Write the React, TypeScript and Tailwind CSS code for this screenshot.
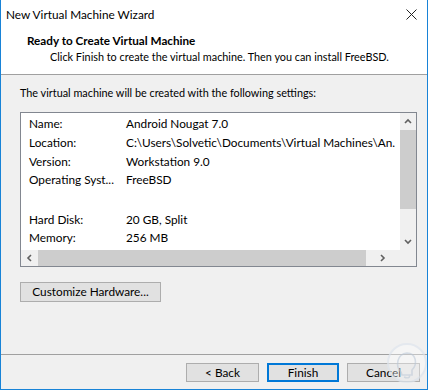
import React from "react";

const font = { fontFamily: 'Lato, "Noto Sans", sans-serif' };

function Chevron({ dir }: { dir: "up" | "down" | "left" | "right" }) {
  const paths: Record<string, string> = {
    up: "M1 5 L4 2 L7 5",
    down: "M1 2 L4 5 L7 2",
    left: "M5 1 L2 4 L5 7",
    right: "M2 1 L5 4 L2 7",
  };
  return (
    <svg width="8" height="8" viewBox="0 0 8 8">
      <path d={paths[dir]} fill="none" stroke="#606060" strokeWidth="1.6" />
    </svg>
  );
}

const rows: ([string, string] | null)[] = [
  ["Name:", "Android Nougat 7.0"],
  ["Location:", "C:\\Users\\Solvetic\\Documents\\Virtual Machines\\An."],
  ["Version:", "Workstation 9.0"],
  ["Operating Syst...", "FreeBSD"],
  null,
  ["Hard Disk:", "20 GB, Split"],
  ["Memory:", "256 MB"],
];

export default function App() {
  return (
    <div
      style={font}
      className="w-[428px] h-[390px] bg-[#f0f0f0] border-x border-b border-[#1883d7] flex flex-col text-[10.85px] text-black overflow-hidden relative whitespace-nowrap"
    >
      {/* Title bar */}
      <div className="h-[29px] bg-white flex items-center justify-between pl-[5px] pr-[10px]">
        <span className="leading-[16px] text-[11.8px]">New Virtual Machine Wizard</span>
        <svg width="11" height="11" viewBox="0 0 11 11">
          <path d="M0.5 0.5 L10.5 10.5 M10.5 0.5 L0.5 10.5" stroke="#222" strokeWidth="1" />
        </svg>
      </div>
      {/* Header */}
      <div className="h-[46px] bg-white pt-[3px] border-b border-[#a0a0a0]">
        <div className="pl-[26px] font-bold leading-[16px] text-[11.7px]">Ready to Create Virtual Machine</div>
        <div className="pl-[49px] leading-[16px] mt-[1px]">
          Click Finish to create the virtual machine. Then you can install FreeBSD.
        </div>
      </div>
      {/* Body */}
      <div className="px-[19px] pt-[10px]">
        <div className="leading-[16px]">The virtual machine will be created with the following settings:</div>
        <div className="mt-[11px] w-[397px] h-[155px] border border-[#828790] bg-white flex flex-col">
          <div className="flex flex-1 min-h-0">
            <div className="flex-1 overflow-hidden pt-[2px] pl-[8px] text-[11.8px]">
              {rows.map((r, i) =>
                r ? (
                  <div key={i} className="flex h-[18.6px] items-center">
                    <span className="w-[97px] shrink-0">{r[0]}</span>
                    <span>{r[1]}</span>
                  </div>
                ) : (
                  <div key={i} className="h-[21px]" />
                )
              )}
            </div>
            <div className="w-[16px] bg-[#f0f0f0] flex flex-col items-center">
              <div className="h-[17px] flex items-center justify-center">
                <Chevron dir="up" />
              </div>
              <div className="w-full h-[79px] bg-[#cdcdcd]" />
              <div className="flex-1" />
              <div className="h-[17px] flex items-center justify-center">
                <Chevron dir="down" />
              </div>
            </div>
          </div>
          <div className="h-[16px] flex bg-[#f0f0f0]">
            <div className="w-[17px] flex items-center justify-center">
              <Chevron dir="left" />
            </div>
            <div className="w-[328px] bg-[#cdcdcd]" />
            <div className="flex-1 flex items-center justify-center">
              <Chevron dir="right" />
            </div>
            <div className="w-[16px] bg-[#f0f0f0]" />
          </div>
        </div>
        <button
          style={font}
          className="mt-[15px] w-[141px] h-[20px] bg-[#e1e1e1] border border-[#adadad] text-[11.8px] leading-[16px] flex items-center justify-center"
        >
          Customize Hardware...
        </button>
      </div>
      <div className="flex-1" />
      {/* Footer */}
      <div className="border-t border-[#a0a0a0] h-[35px] flex justify-end items-start pt-[8px] pr-[7px] gap-[8px]">
        <button style={font} className="w-[73px] h-[19px] bg-[#e1e1e1] border border-[#adadad] text-[11.8px] flex items-center justify-center">
          &lt; Back
        </button>
        <button style={font} className="w-[72px] h-[19px] bg-[#e1e1e1] border-2 border-[#0078d7] text-[11.8px] flex items-center justify-center">
          Finish
        </button>
        <button style={font} className="w-[73px] h-[19px] bg-[#e1e1e1] border border-[#adadad] text-[11.8px] flex items-center justify-center">
          Cancel
        </button>
      </div>
      {/* Watermark logo */}
      <svg className="absolute left-[384px] top-[342px] opacity-70" width="44" height="44" viewBox="0 0 44 44">
        <circle cx="22" cy="21" r="19" fill="#ffffff" fillOpacity="0.5" stroke="#dfe6ee" strokeWidth="2" />
        <path d="M16 30 C10 24 12 12 22 11 C31 11 33 22 27 28 L27 33 L17 33 Z" fill="none" stroke="#c9d3df" strokeWidth="1.6" />
        <path d="M19 35 C23 37 26 35 24 33" fill="none" stroke="#c9d3df" strokeWidth="1.4" />
      </svg>
    </div>
  );
}
